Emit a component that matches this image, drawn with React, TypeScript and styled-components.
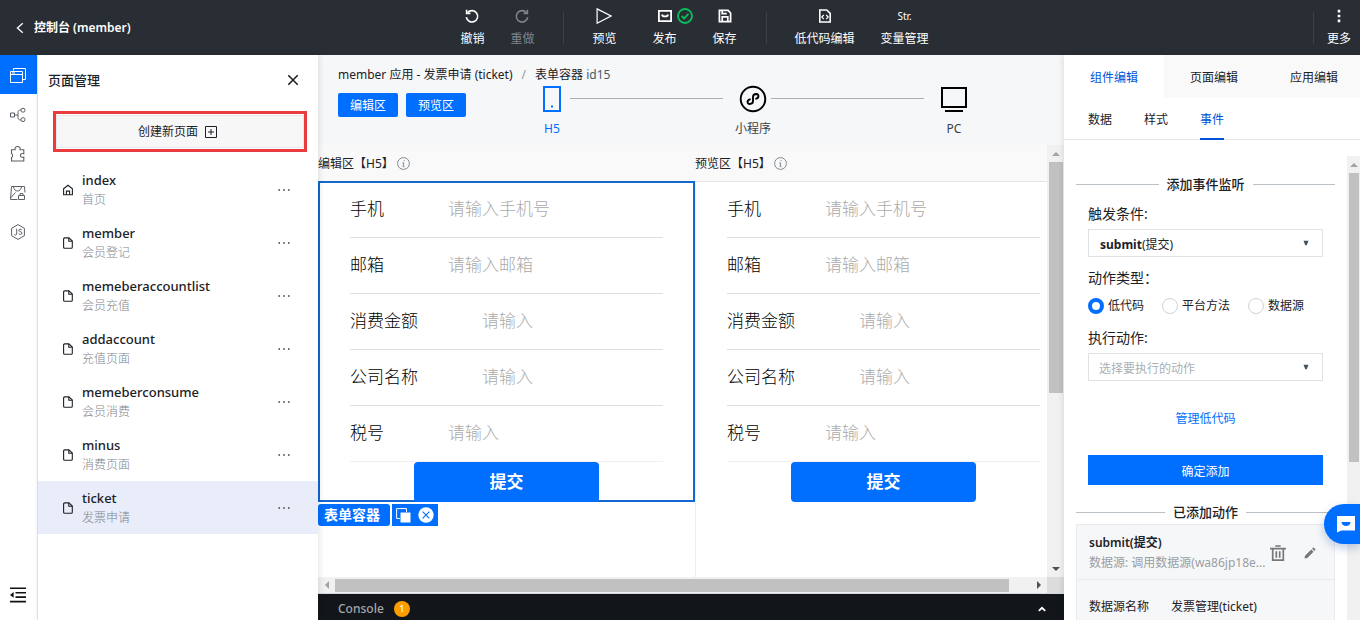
import React from 'react';
import styled, { createGlobalStyle, css } from 'styled-components';

const BLUE = '#006eff';

const GlobalStyle = createGlobalStyle`
  *, *::before, *::after { box-sizing: border-box; }
  body {
    margin: 0;
    font-family: 'Noto Sans', 'Noto Sans CJK SC', sans-serif;
    font-size: 12px;
    line-height: 18px;
    color: #1c2126;
    background: #fff;
  }
  button, input, select { font: inherit; color: inherit; margin: 0; }
  button { border: 0; padding: 0; background: none; cursor: pointer; }
  h1, h2, h3, p, ul, dl, dd { margin: 0; padding: 0; }
  ul { list-style: none; }
  svg { display: block; flex: none; }
`;

/* ---------- icons ---------- */

interface IconProps {
  w?: number;
  h?: number;
  sw?: number;
  children: React.ReactNode;
}

const Icon = ({ w = 16, h = w, sw = 1, children }: IconProps) => (
  <svg
    width={w}
    height={h}
    viewBox={`0 0 ${w} ${h}`}
    fill="none"
    stroke="currentColor"
    strokeWidth={sw}
    aria-hidden="true"
  >
    {children}
  </svg>
);

const ChevronLeftIcon = () => (
  <Icon w={8} h={12} sw={1.3}><path d="M6.8 1.2 1.4 6l5.4 4.8" /></Icon>
);
const UndoIcon = () => (
  <Icon sw={1.6}>
    <path d="M3.6 4.6A5.7 5.7 0 1 1 2.3 9.2" />
    <path d="M2.6 1.8v3.6h3.8" />
  </Icon>
);
const RedoIcon = () => (
  <Icon sw={1.6}>
    <path d="M12.4 4.6A5.7 5.7 0 1 0 13.7 9.2" />
    <path d="M13.4 1.8v3.6H9.6" />
  </Icon>
);
const PlayIcon = () => (
  <Icon sw={1.2}><path d="M1.1.9 15 8 1.1 15.2Z" /></Icon>
);
const PublishIcon = () => (
  <Icon sw={1.8}>
    <path d="M1.9 2.9h12.2v10.2H1.9Z" />
    <path d="M5 6.5c.4 2.6 5.6 2.6 6 0" />
  </Icon>
);
const CheckCircleIcon = () => (
  <Icon sw={1.8}>
    <circle cx="8" cy="8" r="7" />
    <path d="m4.7 8 2.4 2.4 4.4-4.5" />
  </Icon>
);
const SaveIcon = () => (
  <Icon sw={1.7}>
    <path d="M2.4 2.4h8.7l2.5 2.6v8.6H2.4Z" />
    <path d="M5.2 2.6v3h4.6M5.2 13.4V8.9h5.6v4.5" />
  </Icon>
);
const CodeFileIcon = () => (
  <Icon sw={1.6}>
    <path d="M2.8 2h7l3.4 3.4V14H2.8Z" />
    <path d="m6.8 7-2 2.1 2 2.1M9.2 7l2 2.1-2 2.1" strokeWidth="1.2" />
  </Icon>
);
const MoreVerticalIcon = () => (
  <Icon>
    <g fill="currentColor" stroke="none">
      <path d="M6.7 1.8h2.6v2.6H6.7ZM6.7 6.7h2.6v2.6H6.7ZM6.7 11.6h2.6v2.6H6.7Z" />
    </g>
  </Icon>
);
const PagesIcon = () => (
  <Icon w={18}>
    <path d="M4.5 3.5v-2h12v11h-2.6" />
    <path d="M1.5 4.5h12v11h-12ZM1.5 7.5h12M3 6h3" />
  </Icon>
);
const FlowIcon = () => (
  <Icon w={18}>
    <path d="M1.5 7h4v4h-4ZM5.5 9H9M12 4c-2.4 0-3 1-3 2.4v5.2C9 13 9.600 14 12 14" />
    <circle cx="14" cy="4.200" r="2" />
    <circle cx="14" cy="13.600" r="2" />
  </Icon>
);
const PuzzleIcon = () => (
  <Icon w={18} sw={1.1}>
    <path d="M2.500 4.800h3.600C5.600 2.800 6.900 1.500 8.600 1.500s3 1.300 2.500 3.300h3.700v3.900c-2-.5-3.400.3-3.400 1.700s1.400 2.200 3.400 1.700v3.900H2.500v-3.600c1.500-.6 1.500-3.200 0-3.800Z" />
  </Icon>
);
const ImageLockIcon = () => (
  <Icon w={18}>
    <path d="M8.500 15.500h-7l1-13h13l.5 6" />
    <path d="M4.500 2.500C5 8.500 12 8.500 12.500 2.500M1.500 14l5-5.500" />
    <path d="M9.500 11.500h6v4h-6ZM11 11.500V9.600h3v1.900" />
  </Icon>
);
const JsIcon = () => (
  <Icon w={18}>
    <path d="m9 1.600 6.400 3.700v7.400L9 16.400l-6.400-3.700V5.300Z" />
    <path d="M7.700 5.700v5.200c0 1.400-2.100 1.400-2.600.4M12.800 6.900c-.8-1.200-3-.9-3 .5 0 1.700 3.200.9 3.200 2.700 0 1.500-2.400 1.700-3.300.4" />
  </Icon>
);
const CollapseIcon = () => (
  <Icon w={18} sw={1.600}>
    <path d="M1 2.200h16M6.500 6.700H17M6.500 11.100H17M1 15.600h16" />
    <path d="m1 8.900 3.600-2.900v5.800Z" fill="currentColor" stroke="none" />
  </Icon>
);
const CloseIcon = () => (
  <Icon w={12} sw={1.600}><path d="m1.300 1.300 9.400 9.400M10.700 1.300 1.300 10.700" /></Icon>
);
const PlusBoxIcon = () => (
  <Icon w={12}><path d="M.5.5h11v11H.5ZM6 3v6M3 6h6" /></Icon>
);
const HomeIcon = () => (
  <Icon w={12} sw={1.100}>
    <path d="M1.600 4.800 6 1.200l4.400 3.600v6H1.600Z" />
    <path d="M4.400 10.800V7.100h3.200v3.700" />
  </Icon>
);
const FileIcon = () => (
  <Icon w={12} sw={1.100}>
    <path d="M2.600.9h4.300L10.300 4v6.200a1 1 0 0 1-1 1H2.600a1 1 0 0 1-1-1V1.900a1 1 0 0 1 1-1Z" />
    <path d="M6.800 1v3.200h3.400" />
  </Icon>
);
const DotsIcon = () => (
  <Icon w={12} h={4}>
    <g fill="currentColor" stroke="none">
      <circle cx="1.200" cy="2" r=".9" /><circle cx="6" cy="2" r=".9" /><circle cx="10.800" cy="2" r=".9" />
    </g>
  </Icon>
);
const PhoneIcon = () => (
  <Icon w={30} h={28} sw={2}>
    <path d="M7 2h16v24H7Z" />
    <path d="M14 21.500h2" />
  </Icon>
);
const MiniProgramIcon = () => (
  <Icon w={30} h={28} sw={1.900}>
    <circle cx="15" cy="14" r="12.300" />
    <path d="M11.900 14.300c-3 .8-3.200 4.600-.2 4.700 2.200 0 3.300-1.200 3.300-2.900v-4.200c0-1.700 1.100-2.900 3.300-2.900 3 .1 2.800 3.900-.2 4.700" strokeLinecap="round" />
  </Icon>
);
const DesktopIcon = () => (
  <Icon w={30} h={28} sw={2}>
    <path d="M3 3h24v19H3ZM6 26h18" />
  </Icon>
);
const InfoIcon = () => (
  <Icon w={13}>
    <circle cx="6.500" cy="6.500" r="5.900" />
    <path d="M7.200 3.200 7 4.200M5.300 5.900h1.400l-.6 3.700h1.400" />
  </Icon>
);
const CopyIcon = () => (
  <Icon w={15}>
    <path d="M4 10.500H.6V.6h9.900V4" />
    <path d="M4.500 4.500h10v10h-10Z" fill="currentColor" stroke="none" />
  </Icon>
);
const RemoveIcon = () => (
  <Icon w={16}>
    <circle cx="8" cy="8" r="7.700" fill="currentColor" stroke="none" />
    <path d="m4.600 4.600 6.800 6.800M11.400 4.600l-6.800 6.800" stroke={BLUE} strokeWidth="1.100" />
  </Icon>
);
const TrashIcon = () => (
  <Icon sw={1.700}>
    <path d="M0 3.700h16M5.300 1h5.400M2.700 4v11.100h10.600V4M6.300 6.200v6.600M9.700 6.200v6.600" />
  </Icon>
);
const PencilIcon = () => (
  <Icon w={12}>
    <path d="M.5 11.500 1 8.700l6.300-6.200 2.200 2.200-6.200 6.300ZM8.100 1.700 9.200.6c.4-.4 2.600 1.800 2.200 2.200l-1.100 1.100Z" fill="currentColor" stroke="none" />
  </Icon>
);
const ChevronUpIcon = () => (
  <Icon w={8} h={6} sw={1.800}><path d="m.8 4.800 3.200-3 3.200 3" /></Icon>
);
const ChatIcon = () => (
  <Icon w={18}>
    <path d="M0 1h18v14.500H4.500L0 17.500Z" fill="#fff" stroke="none" />
    <path d="M4.500 7h9c0 5.400-9 5.400-9 0Z" fill={BLUE} stroke="none" />
  </Icon>
);

/* ---------- page frame ---------- */

const Page = styled.div`
  display: flex;
  flex-direction: column;
  height: 100vh;
  overflow: hidden;
`;

const Body = styled.div`
  display: flex;
  flex: 1;
  min-height: 0;
`;

/* ---------- top bar ---------- */

const TopBar = styled.header`
  display: flex;
  align-items: center;
  flex: none;
  height: 55px;
  color: #fff;
  background: #292d34;
`;

const TopSide = styled.div<{ $end?: boolean }>`
  display: flex;
  flex: 1;
  align-items: center;
  justify-content: ${(p) => (p.$end ? 'flex-end' : 'flex-start')};
  padding: ${(p) => (p.$end ? '0 9px 0 0' : '0 0 0 16px')};
`;

const BackButton = styled.button`
  display: flex;
  align-items: center;
  gap: 10px;
  font-weight: 600;
`;

const ToolBar = styled.nav`
  display: flex;
  align-items: center;
  margin-left: 22px;
`;

const ToolGroup = styled.div<{ $gap: number }>`
  display: flex;
  gap: ${(p) => p.$gap}px;
`;

const ToolDivider = styled.span<{ $end?: boolean }>`
  width: 1px;
  height: 32px;
  margin: ${(p) => (p.$end ? '0 13px 0 0' : '0 28px 0 29px')};
  background: #3d424a;
`;

const ToolButton = styled.button<{ $dim?: boolean }>`
  position: relative;
  display: flex;
  flex-direction: column;
  align-items: center;
  gap: 6px;
  white-space: nowrap;
  color: ${(p) => (p.$dim ? '#80858b' : '#fff')};
`;

const GlyphText = styled.span`
  height: 16px;
  font-size: 10px;
  line-height: 16px;
`;

const StatusMark = styled.span`
  position: absolute;
  top: 0;
  left: 24px;
  color: #0abf5b;
`;

/* ---------- icon rail ---------- */

const Rail = styled.nav`
  display: flex;
  flex-direction: column;
  flex: none;
  width: 38px;
  padding-bottom: 16px;
  border-right: 1px solid #e5e7ea;
`;

const RailButton = styled.button<{ $active?: boolean; $last?: boolean }>`
  display: flex;
  align-items: center;
  justify-content: center;
  width: 37px;
  height: ${(p) => (p.$last ? '18px' : '39px')};
  margin-top: ${(p) => (p.$last ? 'auto' : '0')};
  padding: ${(p) => (p.$last ? '0 1px 0 0' : '2px 2px 0 0')};
  color: ${(p) => (p.$active ? '#fff' : p.$last ? '#111' : '#5b6066')};
  background: ${(p) => (p.$active ? BLUE : 'none')};
`;

/* ---------- page list ---------- */

const PagePanel = styled.aside`
  flex: none;
  width: 280px;
  background: #fff;
  box-shadow: 1px 0 6px rgba(0, 0, 0, 0.12);
  z-index: 1;
`;

const PanelHeader = styled.div`
  display: flex;
  align-items: center;
  justify-content: space-between;
  height: 50px;
  padding: 0 19px 0 10px;
`;

const PanelTitle = styled.h2`
  font-size: 13px;
  font-weight: 500;
  line-height: 20px;
`;

const CreateFrame = styled.div`
  height: 41px;
  margin: 6px 11px 11px 15px;
  padding: 1px 0;
  border: 3px solid #ea3c3f;
`;

const CreateButton = styled.button`
  display: flex;
  align-items: center;
  justify-content: center;
  gap: 7px;
  width: 100%;
  height: 33px;
  padding-right: 5px;
  border: 1px solid #e8e8e8;
  background: #f7f7f7;
`;

const PageItem = styled.li<{ $active?: boolean }>`
  display: flex;
  align-items: center;
  height: 53px;
  padding: 1px 28px 0 24px;
  background: ${(p) => (p.$active ? '#e9edfa' : 'transparent')};
`;

const PageLink = styled.a`
  display: flex;
  flex: 1;
  align-items: center;
  gap: 8px;
  color: inherit;
  text-decoration: none;
`;

const PageName = styled.span`
  display: block;
  font-size: 13px;
  font-weight: 500;
  line-height: 20px;
`;

const PageNote = styled.span`
  display: block;
  line-height: 20px;
  font-weight: 300;
  color: #80868c;
`;

const DotsButton = styled.button`
  padding: 4px 0;
  color: #555;
`;

/* ---------- work area ---------- */

const Main = styled.main`
  display: flex;
  flex: 1;
  flex-direction: column;
  min-width: 0;
`;

const MainHead = styled.div`
  flex: none;
  height: 90px;
  padding: 11px 95px 0 20px;
  background: #f6f7f9;
`;

const Crumbs = styled.nav`
  display: flex;
  gap: 9px;
  height: 19px;
  white-space: pre;
`;

const Slash = styled.span`
  color: #999;
`;

const CrumbId = styled.span`
  color: #3f5c6b;
`;

const HeadRow = styled.div`
  display: flex;
  align-items: flex-start;
`;

const ZoneButtons = styled.div`
  display: flex;
  gap: 8px;
  margin: 8px 71px 0 0;
`;

const ZoneButton = styled.button`
  width: 60px;
  height: 24px;
  padding-top: 2px;
  border-radius: 2px;
  line-height: 22px;
  color: #fff;
  background: ${BLUE};
`;

const Stepper = styled.div`
  display: flex;
  flex: 1;
`;

const Step = styled.button<{ $active?: boolean }>`
  display: flex;
  flex: none;
  flex-direction: column;
  align-items: center;
  gap: 7px;
  width: 30px;
  white-space: nowrap;
  color: ${(p) => (p.$active ? BLUE : '#000')};
`;

const StepLabel = styled.span<{ $active?: boolean }>`
  color: ${(p) => (p.$active ? BLUE : '#3a3f45')};
`;

const StepLine = styled.span`
  flex: 1;
  height: 1px;
  margin: 13px 15px 0 3px;
  background: #a9afb5;
`;

const Workspace = styled.div`
  display: grid;
  grid-template: minmax(0, 1fr) 16px / minmax(0, 1fr) 17px;
  flex: 1;
  min-height: 0;
`;

const Panes = styled.div`
  display: flex;
  min-width: 0;
  overflow: hidden;
`;

const Pane = styled.section`
  flex: none;
  width: 377px;
  & + & { box-shadow: inset 1px 0 #eee; }
`;

const PaneTitle = styled.h3`
  display: flex;
  align-items: center;
  gap: 3px;
  height: 36px;
  padding-top: 1px;
  font-size: 12px;
  font-weight: 400;
  background: #f9f9f9;
  svg { color: #7d8a94; }
`;

const Canvas = styled.form<{ $selected?: boolean }>`
  position: relative;
  height: 321px;
  padding: 0 32px;
  border-top: 1px solid #e5e5e5;
  ${(p) => p.$selected && css`
    &::after {
      content: '';
      position: absolute;
      inset: -1px 0 0;
      border: 2px solid #1068d0;
      pointer-events: none;
    }
  `}
`;

const Field = styled.label<{ $last?: boolean }>`
  display: flex;
  align-items: center;
  gap: 64px;
  height: 56px;
  padding-bottom: 1px;
  border-bottom: 1px solid ${(p) => (p.$last ? '#f0f0f0' : '#dedede')};
  font-size: 17px;
  line-height: 26px;
  font-weight: 300;
  white-space: nowrap;
  color: #000;
`;

const FieldInput = styled.input`
  flex: 1;
  min-width: 0;
  padding: 0;
  border: 0;
  outline: 0;
  background: none;
  &::placeholder { color: #aaa; opacity: 1; }
`;

const Submit = styled.button`
  position: relative;
  display: block;
  width: 185px;
  height: 40px;
  margin: 0 auto;
  border-radius: 4px;
  font-size: 17px;
  font-weight: 700;
  line-height: 38px;
  color: #fff;
  background: ${BLUE};
  z-index: 1;
`;

const SelectionBar = styled.div`
  display: flex;
  gap: 2px;
  margin-top: 2px;
  color: #fff;
`;

const SelectionTag = styled.span`
  width: 72px;
  height: 22px;
  padding-right: 4px;
  border-radius: 3px;
  text-align: center;
  font-size: 14px;
  font-weight: 700;
  line-height: 22px;
  background: ${BLUE};
`;

const SelectionTools = styled.span`
  display: flex;
  align-items: center;
  gap: 7px;
  padding: 0 4px;
  background: ${BLUE};
`;

/* ---------- scroll bars ---------- */

const Track = styled.div<{ $horizontal?: boolean }>`
  display: flex;
  flex-direction: ${(p) => (p.$horizontal ? 'row' : 'column')};
  min-width: 0;
  min-height: 0;
  background: #f1f1f1;
`;

const ThumbArea = styled.div<{ $horizontal?: boolean }>`
  flex: 1;
  min-width: 0;
  min-height: 0;
  padding: ${(p) => (p.$horizontal ? '2px 0 1px' : '0 1px 0 2px')};
`;

const Thumb = styled.div<{ $horizontal?: boolean; $share: number }>`
  width: ${(p) => (p.$horizontal ? `${p.$share}%` : '100%')};
  height: ${(p) => (p.$horizontal ? '100%' : `${p.$share}%`)};
  background: #c1c1c1;
`;

const TrackEnd = styled.span<{ $dark?: boolean }>`
  display: flex;
  flex: none;
  align-items: center;
  justify-content: center;
  min-width: 12px;
  flex-basis: 17px;
  color: ${(p) => (p.$dark ? '#505050' : '#a3a3a3')};
`;

const Corner = styled.div`
  background: #dcdcdc;
`;

type Direction = 'up' | 'down' | 'left' | 'right';
const ARROWS: Record<Direction, string> = {
  up: 'M0 6 4 2l4 4Z',
  down: 'M0 2l4 4 4-4Z',
  left: 'M6 0 2 4l4 4Z',
  right: 'M2 0l4 4-4 4Z',
};
const Arrow = ({ to, dark }: { to: Direction; dark?: boolean }) => (
  <TrackEnd $dark={dark}>
    <Icon w={8}><path d={ARROWS[to]} fill="currentColor" stroke="none" /></Icon>
  </TrackEnd>
);

const ScrollBar = ({ horizontal, share, dark }: { horizontal?: boolean; share: number; dark?: boolean }) => (
  <Track $horizontal={horizontal} aria-hidden="true">
    <Arrow to={horizontal ? 'left' : 'up'} />
    <ThumbArea $horizontal={horizontal}><Thumb $horizontal={horizontal} $share={share} /></ThumbArea>
    <Arrow to={horizontal ? 'right' : 'down'} dark={dark} />
  </Track>
);

/* ---------- console ---------- */

const ConsoleBar = styled.footer`
  display: flex;
  flex: none;
  align-items: center;
  height: 27px;
  padding: 4px 18px 0 20px;
  border-top: 1px solid #d5d8dc;
  font-weight: 500;
  color: #a5a8ab;
  background: #12161a;
`;

const Count = styled.span`
  width: 16px;
  height: 16px;
  margin: 0 auto 0 10px;
  border-radius: 8px;
  text-align: center;
  font-size: 9px;
  line-height: 16px;
  color: #fff;
  background: #ff9d00;
`;

const ConsoleToggle = styled.button`
  color: #fff;
`;

/* ---------- inspector ---------- */

const Inspector = styled.aside`
  display: flex;
  flex: none;
  flex-direction: column;
  width: 296px;
  background: #fff;
  box-shadow: -1px 0 6px rgba(0, 0, 0, 0.1);
  overflow: hidden;
  z-index: 1;
`;

const Tabs = styled.div`
  display: flex;
  flex: none;
  height: 43px;
`;

const Tab = styled.button<{ $active?: boolean }>`
  flex: 0 0 100px;
  padding-top: 3px;
  color: ${(p) => (p.$active ? '#0052d9' : '#1c2126')};
  background: ${(p) => (p.$active ? '#fff' : '#f9f9f9')};
`;

const SubTabs = styled.div`
  display: flex;
  flex: none;
  gap: 32px;
  height: 42px;
  padding-left: 24px;
  border-bottom: 1px solid #e5e5e5;
`;

const SubTab = styled.button<{ $active?: boolean }>`
  height: 42px;
  padding-top: 4px;
  border-bottom: 2px solid ${(p) => (p.$active ? '#0052d9' : 'transparent')};
  color: ${(p) => (p.$active ? '#0052d9' : '#1c2126')};
`;

const InspectorBody = styled.div`
  display: flex;
  flex: 1;
  min-height: 0;
  margin-top: 16px;
`;

const InspectorScroll = styled.div`
  flex: 1;
  min-width: 0;
  padding: 18px 12px 0;
  overflow: hidden;
`;

const InspectorTrack = styled.div`
  display: flex;
  flex: none;
  width: 13px;
  height: 500px;
  & > div { flex: 1; min-width: 0; }
`;

const Heading = styled.h3`
  display: flex;
  align-items: center;
  gap: 8px;
  font-size: 13px;
  font-weight: 500;
  line-height: 20px;
  &::before, &::after {
    content: '';
    flex: 1;
    height: 1px;
    background: #b9c0c6;
  }
`;

const EventForm = styled.form`
  display: flex;
  flex-direction: column;
  padding: 9px 12px 17px;
`;

const Label = styled.label`
  font-size: 14px;
  line-height: 22px;
`;

const Legend = styled(Label).attrs({ as: 'legend' })`
  padding: 0;
`;

const SelectBox = styled.div`
  position: relative;
  display: flex;
  margin: 4px 0 10px;
`;

const Select = styled.select<{ $tone: string }>`
  flex: 1;
  height: 28px;
  padding: 4px 24px 0 10px;
  border: 1px solid #dfe2e5;
  border-radius: 0;
  appearance: none;
  color: ${(p) => p.$tone};
  background: #fff;
  option { color: #1c2126; }
`;

const SelectedValue = styled.span`
  position: absolute;
  left: 12px;
  top: 7px;
  pointer-events: none;
`;

const Caret = styled.span`
  position: absolute;
  right: 14px;
  top: 11px;
  color: #42525e;
  pointer-events: none;
`;

const Choices = styled.fieldset`
  min-width: 0;
  margin: 0 0 12px;
  padding: 0;
  border: 0;
`;

const ChoiceRow = styled.div`
  display: flex;
  gap: 18px;
  margin-top: 8px;
  height: 18px;
`;

const Choice = styled.label`
  display: flex;
  align-items: center;
  gap: 4px;
  white-space: nowrap;
`;

const Radio = styled.input.attrs({ type: 'radio' })`
  width: 16px;
  height: 16px;
  appearance: none;
  border: 1px solid #cdd4da;
  border-radius: 50%;
  background: #fff;
  &:checked { border: 4px solid ${BLUE}; }
`;

const ManageLink = styled.a`
  align-self: center;
  margin: 19px 0 27px;
  color: ${BLUE};
  text-decoration: none;
`;

const Confirm = styled.button`
  height: 30px;
  padding-top: 3px;
  color: #fff;
  background: ${BLUE};
`;

const ActionCard = styled.article`
  margin-top: 2px;
  border: 1px solid #e8eaed;
  background: #f6f7f9;
`;

const ActionHead = styled.div`
  display: flex;
  align-items: center;
  height: 55px;
  padding: 2px 18px 0 12px;
  border-bottom: 1px solid #e8eaed;
  color: #777;
`;

const ActionText = styled.div`
  flex: 1;
  min-width: 0;
  margin-right: 6px;
`;

const ActionName = styled.h4`
  margin: 0;
  font-size: 12px;
  font-weight: 600;
  line-height: 20px;
  color: #1c2126;
`;

const ActionNote = styled.p`
  line-height: 20px;
  color: #9a9ea3;
  white-space: nowrap;
`;

const ActionButtons = styled.div`
  display: flex;
  align-items: center;
  gap: 18px;
`;

const Detail = styled.dl`
  display: flex;
  gap: 22px;
  padding: 18px 12px;
`;

const ChatButton = styled.button`
  position: fixed;
  right: 0;
  bottom: 76px;
  display: flex;
  align-items: center;
  justify-content: flex-end;
  width: 36px;
  height: 40px;
  padding-right: 5px;
  border-radius: 20px 0 0 20px;
  background: ${BLUE};
  box-shadow: 0 4px 10px rgba(0, 60, 140, 0.25);
  z-index: 2;
`;

/* ---------- data ---------- */

const PAGES = [
  ['index', '首页'],
  ['member', '会员登记'],
  ['memeberaccountlist', '会员充值'],
  ['addaccount', '充值页面'],
  ['memeberconsume', '会员消费'],
  ['minus', '消费页面'],
  ['ticket', '发票申请'],
];

const FIELDS = [
  ['手机', '请输入手机号'],
  ['邮箱', '请输入邮箱'],
  ['消费金额', '请输入'],
  ['公司名称', '请输入'],
  ['税号', '请输入'],
];

const TicketForm = ({ selected }: { selected?: boolean }) => (
  <Canvas $selected={selected}>
    {FIELDS.map(([label, hint], i) => (
      <Field key={label} $last={i === FIELDS.length - 1}>
        {label}
        <FieldInput placeholder={hint} />
      </Field>
    ))}
    <Submit type="button">提交</Submit>
  </Canvas>
);

const CaretDown = () => (
  <Caret><Icon w={6}><path d="M.5.8h5L3.700 5.200H2.300Z" fill="currentColor" stroke="none" /></Icon></Caret>
);

export default function App() {
  return (
    <Page>
      <GlobalStyle />
      <TopBar>
        <TopSide>
          <BackButton><ChevronLeftIcon />控制台 (member)</BackButton>
        </TopSide>
        <ToolBar aria-label="工具栏">
          <ToolGroup $gap={26}>
            <ToolButton><UndoIcon />撤销</ToolButton>
            <ToolButton $dim><RedoIcon />重做</ToolButton>
          </ToolGroup>
          <ToolDivider />
          <ToolGroup $gap={36}>
            <ToolButton><PlayIcon />预览</ToolButton>
            <ToolButton><PublishIcon />发布<StatusMark><CheckCircleIcon /></StatusMark></ToolButton>
            <ToolButton><SaveIcon />保存</ToolButton>
          </ToolGroup>
          <ToolDivider />
          <ToolGroup $gap={26}>
            <ToolButton><CodeFileIcon />低代码编辑</ToolButton>
            <ToolButton><GlyphText>Str.</GlyphText>变量管理</ToolButton>
          </ToolGroup>
        </ToolBar>
        <TopSide $end>
          <ToolDivider $end />
          <ToolButton><MoreVerticalIcon />更多</ToolButton>
        </TopSide>
      </TopBar>

      <Body>
        <Rail>
          <RailButton $active aria-label="页面"><PagesIcon /></RailButton>
          <RailButton aria-label="流程"><FlowIcon /></RailButton>
          <RailButton aria-label="组件"><PuzzleIcon /></RailButton>
          <RailButton aria-label="素材"><ImageLockIcon /></RailButton>
          <RailButton aria-label="代码"><JsIcon /></RailButton>
          <RailButton $last aria-label="收起"><CollapseIcon /></RailButton>
        </Rail>

        <PagePanel>
          <PanelHeader>
            <PanelTitle>页面管理</PanelTitle>
            <button aria-label="关闭"><CloseIcon /></button>
          </PanelHeader>
          <CreateFrame>
            <CreateButton>创建新页面<PlusBoxIcon /></CreateButton>
          </CreateFrame>
          <ul>
            {PAGES.map(([name, note], i) => (
              <PageItem key={name} $active={name === 'ticket'}>
                <PageLink href={`#${name}`}>
                  {i === 0 ? <HomeIcon /> : <FileIcon />}
                  <span>
                    <PageName>{name}</PageName>
                    <PageNote>{note}</PageNote>
                  </span>
                </PageLink>
                <DotsButton aria-label={`${name} 更多`}><DotsIcon /></DotsButton>
              </PageItem>
            ))}
          </ul>
        </PagePanel>

        <Main>
          <MainHead>
            <Crumbs>
              <span>member 应用 - 发票申请 (ticket)</span>
              <Slash>/</Slash>
              <span>表单容器 <CrumbId>id15</CrumbId></span>
            </Crumbs>
            <HeadRow>
              <ZoneButtons>
                <ZoneButton>编辑区</ZoneButton>
                <ZoneButton>预览区</ZoneButton>
              </ZoneButtons>
              <Stepper>
                <Step $active><PhoneIcon /><StepLabel $active>H5</StepLabel></Step>
                <StepLine />
                <Step><MiniProgramIcon /><StepLabel>小程序</StepLabel></Step>
                <StepLine />
                <Step><DesktopIcon /><StepLabel>PC</StepLabel></Step>
              </Stepper>
            </HeadRow>
          </MainHead>

          <Workspace>
            <Panes>
              <Pane>
                <PaneTitle>编辑区【H5】<InfoIcon /></PaneTitle>
                <TicketForm selected />
                <SelectionBar>
                  <SelectionTag>表单容器</SelectionTag>
                  <SelectionTools>
                    <button aria-label="复制"><CopyIcon /></button>
                    <button aria-label="删除"><RemoveIcon /></button>
                  </SelectionTools>
                </SelectionBar>
              </Pane>
              <Pane>
                <PaneTitle>预览区【H5】<InfoIcon /></PaneTitle>
                <TicketForm />
              </Pane>
            </Panes>
            <ScrollBar share={58} dark />
            <ScrollBar horizontal share={97} dark />
            <Corner />
          </Workspace>

          <ConsoleBar>
            Console
            <Count>1</Count>
            <ConsoleToggle aria-label="展开"><ChevronUpIcon /></ConsoleToggle>
          </ConsoleBar>
        </Main>

        <Inspector>
          <Tabs>
            <Tab $active>组件编辑</Tab>
            <Tab>页面编辑</Tab>
            <Tab>应用编辑</Tab>
          </Tabs>
          <SubTabs>
            <SubTab>数据</SubTab>
            <SubTab>样式</SubTab>
            <SubTab $active>事件</SubTab>
          </SubTabs>
          <InspectorBody>
            <InspectorScroll>
              <Heading>添加事件监听</Heading>
              <EventForm>
                <Label htmlFor="trigger">触发条件:</Label>
                <SelectBox>
                  <Select id="trigger" $tone="transparent">
                    <option>submit(提交)</option>
                  </Select>
                  <SelectedValue aria-hidden="true"><b>submit</b>(提交)</SelectedValue>
                  <CaretDown />
                </SelectBox>
                <Choices>
                  <Legend>动作类型：</Legend>
                  <ChoiceRow>
                    <Choice><Radio name="kind" defaultChecked />低代码</Choice>
                    <Choice><Radio name="kind" />平台方法</Choice>
                    <Choice><Radio name="kind" />数据源</Choice>
                  </ChoiceRow>
                </Choices>
                <Label htmlFor="action">执行动作:</Label>
                <SelectBox>
                  <Select id="action" $tone="#aaafb4">
                    <option>选择要执行的动作</option>
                  </Select>
                  <CaretDown />
                </SelectBox>
                <ManageLink href="#lowcode">管理低代码</ManageLink>
                <Confirm type="button">确定添加</Confirm>
              </EventForm>
              <Heading>已添加动作</Heading>
              <ActionCard>
                <ActionHead>
                  <ActionText>
                    <ActionName>submit(提交)</ActionName>
                    <ActionNote>数据源: 调用数据源(wa86jp18e...</ActionNote>
                  </ActionText>
                  <ActionButtons>
                    <button aria-label="删除动作"><TrashIcon /></button>
                    <button aria-label="编辑动作"><PencilIcon /></button>
                  </ActionButtons>
                </ActionHead>
                <Detail>
                  <dt>数据源名称</dt>
                  <dd>发票管理(ticket)</dd>
                </Detail>
              </ActionCard>
            </InspectorScroll>
            <InspectorTrack>
              <ScrollBar share={62} />
            </InspectorTrack>
          </InspectorBody>
        </Inspector>
      </Body>

      <ChatButton aria-label="客服"><ChatIcon /></ChatButton>
    </Page>
  );
}
